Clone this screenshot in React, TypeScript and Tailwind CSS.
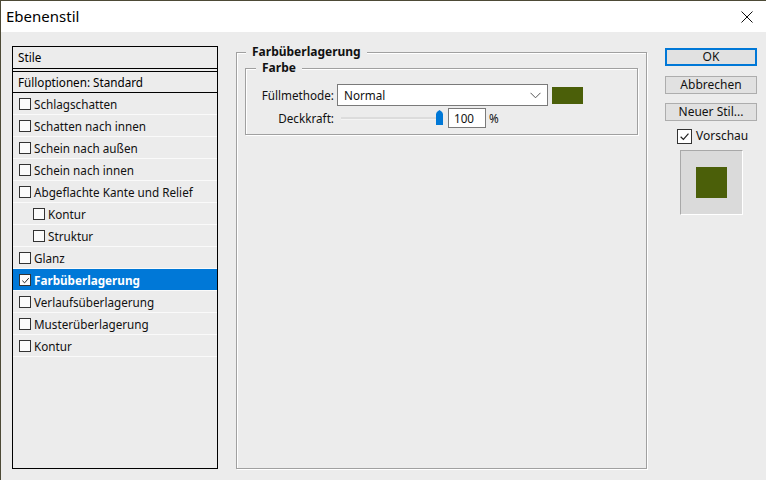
import React from 'react';

type StyleItem = {
  label: string;
  checked?: boolean;
  indent?: boolean;
  selected?: boolean;
};

const styleItems: StyleItem[] = [
  { label: 'Schlagschatten' },
  { label: 'Schatten nach innen' },
  { label: 'Schein nach außen' },
  { label: 'Schein nach innen' },
  { label: 'Abgeflachte Kante und Relief' },
  { label: 'Kontur', indent: true },
  { label: 'Struktur', indent: true },
  { label: 'Glanz' },
  { label: 'Farbüberlagerung', checked: true, selected: true },
  { label: 'Verlaufsüberlagerung' },
  { label: 'Musterüberlagerung' },
  { label: 'Kontur' },
];

const OLIVE = 'bg-[#4b5f09]';

const CheckMark = ({ size = 10 }: { size?: number }) => (
  <svg width={size} height={size} viewBox="0 0 10 10" fill="none">
    <path d="M1.5 5.2 L4 7.6 L8.6 2.4" stroke="#222" strokeWidth="1.1" />
  </svg>
);

const Checkbox = ({ checked }: { checked?: boolean }) => (
  <span className="w-[12px] h-[12px] shrink-0 border border-[#333] bg-[#fbfbfb] flex items-center justify-center">
    {checked && <CheckMark size={9} />}
  </span>
);

const StyleRow = ({ item }: { item: StyleItem }) => (
  <div
    className={`h-[22px] pt-[1px] flex items-center border-b border-[#fafafa] ${
      item.indent ? 'pl-[20px]' : 'pl-[6px]'
    } ${item.selected ? 'bg-[#0078d7] text-white font-bold' : 'text-[#111]'}`}
  >
    <Checkbox checked={item.checked} />
    <span className="ml-[3px] leading-none pt-[1px]">{item.label}</span>
  </div>
);

const Button = ({ children, primary }: { children: React.ReactNode; primary?: boolean }) => (
  <button
    className={`w-[92px] h-[18px] bg-[#e1e1e1] text-[12px] leading-none text-[#111] flex items-center justify-center ${
      primary ? 'border-2 border-[#0078d7]' : 'border border-[#adadad]'
    }`}
  >
    {children}
  </button>
);

export default function App() {
  return (
    <div
      className="w-[766px] h-[480px] bg-[#ececec] flex flex-col border-t border-l border-[#4d4a36] overflow-hidden text-[11.7px]"
      style={{ fontFamily: '"Noto Sans", "Open Sans", sans-serif' }}
    >
      {/* title bar */}
      <div className="h-[31px] bg-white flex items-center justify-between pl-[5px] pr-[13px] shrink-0">
        <span className="text-[15px] text-black">Ebenenstil</span>
        <svg width="12" height="12" viewBox="0 0 12 12">
          <path d="M0.5 0.5 L11.5 11.5 M11.5 0.5 L0.5 11.5" stroke="#111" strokeWidth="1" />
        </svg>
      </div>

      <div className="flex items-start pl-[11px] pt-[12px]">
        {/* style list */}
        <div className="mt-[2px] w-[206px] h-[423px] border border-black flex flex-col">
          <div className="h-[22px] pt-[1px] flex items-center pl-[5px] border-b border-black shrink-0">Stile</div>
          <div className="h-[2px] shrink-0" />
          <div className="h-[22px] pt-[2px] flex items-center pl-[5px] border-t border-b border-black shrink-0">
            Fülloptionen: Standard
          </div>
          {styleItems.map((item, i) => (
            <StyleRow key={i} item={item} />
          ))}
        </div>

        {/* settings group */}
        <fieldset className="ml-[18px] w-[411px] h-[425px] border border-[#a0a0a0] shadow-[1px_1px_0_#fff,inset_1px_1px_0_#fff] px-[8px]">
          <legend className="ml-[1px] px-[6px] h-[16px] leading-[16px] text-[12px] font-bold text-[#111] bg-[#ececec]">
            Farbüberlagerung
          </legend>
          <fieldset className="border border-[#a0a0a0] shadow-[1px_1px_0_#fff,inset_1px_1px_0_#fff]">
            <legend className="ml-[10px] px-[6px] h-[16px] leading-[16px] text-[12px] font-bold text-[#111] bg-[#ececec]">
              Farbe
            </legend>
            <div className="pt-[8px] pb-[6px]">
              <div className="h-[22px] flex items-center">
                <span className="w-[88px] text-right text-[#111] pt-[1px]">Füllmethode:</span>
                <div className="ml-[3px] w-[211px] h-[22px] bg-white border border-[#7a7a7a] flex items-center justify-between pl-[6px] pr-[6px]">
                  <span className="text-[#111] pt-[1px]">Normal</span>
                  <svg width="11" height="7" viewBox="0 0 11 7">
                    <path d="M0.5 0.8 L5.5 5.8 L10.5 0.8" stroke="#555" strokeWidth="1" fill="none" />
                  </svg>
                </div>
                <div className={`ml-[4px] w-[31px] h-[17px] ${OLIVE}`} />
              </div>
              <div className="mt-[2px] h-[20px] flex items-center">
                <span className="w-[88px] text-right text-[#111] pt-[1px]">Deckkraft:</span>
                <div className="ml-[7px] w-[102px] h-[20px] flex items-center relative">
                  <div className="w-[96px] h-[3px] bg-[#dcdcdc] border-b border-[#f4f4f4]" />
                  <svg width="7" height="15" viewBox="0 0 7 15" className="absolute right-0 top-[2px]">
                    <path d="M0 4 Q0 2 3.5 0 Q7 2 7 4 L7 15 L0 15 Z" fill="#0078d7" />
                  </svg>
                </div>
                <div className="ml-[5px] w-[38px] h-[20px] bg-white border border-[#7a7a7a] flex items-center pl-[5px] pt-[1px] text-[#111]">
                  100
                </div>
                <span className="ml-[3px] text-[#111] pt-[1px]">%</span>
              </div>
            </div>
          </fieldset>
        </fieldset>

        {/* buttons and preview */}
        <div className="ml-[18px] mt-[4px] w-[92px] flex flex-col">
          <Button primary>OK</Button>
          <div className="mt-[10px]">
            <Button>Abbrechen</Button>
          </div>
          <div className="mt-[9px]">
            <Button>Neuer Stil...</Button>
          </div>
          <div className="mt-[7px] h-[16px] flex items-center pl-[12px]">
            <span className="w-[15px] h-[15px] border border-[#333] bg-white flex items-center justify-center">
              <CheckMark size={11} />
            </span>
            <span className="ml-[4px] text-[12px] text-[#111]">Vorschau</span>
          </div>
          <div className="mt-[6px] self-center w-[63px] h-[65px] bg-[#dadada] border-t border-l border-[#a8a8a8] border-r border-b border-r-white border-b-white flex items-center justify-center">
            <div className={`w-[31px] h-[31px] ${OLIVE}`} />
          </div>
        </div>
      </div>
    </div>
  );
}
